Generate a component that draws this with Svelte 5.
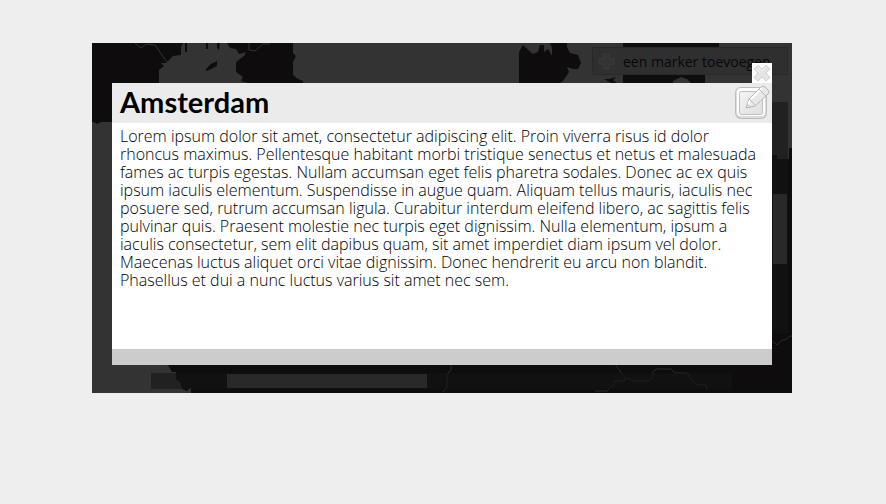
<script>
  const title = 'Amsterdam';
  const lines = [
    'Lorem ipsum dolor sit amet, consectetur adipiscing elit. Proin viverra risus id dolor',
    'rhoncus maximus. Pellentesque habitant morbi tristique senectus et netus et malesuada',
    'fames ac turpis egestas. Nullam accumsan eget felis pharetra sodales. Donec ac ex quis',
    'ipsum iaculis elementum. Suspendisse in augue quam. Aliquam tellus mauris, iaculis nec',
    'posuere sed, rutrum accumsan ligula. Curabitur interdum eleifend libero, ac sagittis felis',
    'pulvinar quis. Praesent molestie nec turpis eget dignissim. Nulla elementum, ipsum a',
    'iaculis consectetur, sem elit dapibus quam, sit amet imperdiet diam ipsum vel dolor.',
    'Maecenas luctus aliquet orci vitae dignissim. Donec hendrerit eu arcu non blandit.',
    'Phasellus et dui a nunc luctus varius sit amet nec sem.'
  ];
</script>

<main>
  <section class="map">
    <svg class="terrain" viewBox="0 0 700 350" preserveAspectRatio="xMidYMid slice" aria-hidden="true">
      <rect width="700" height="350" fill="#0e0c0d" />
      <g fill="#333">
        <path d="M67 40V27l5-4-3-3 5 0 7-7 8-1V4l2-4h2v9h2V0h19v6h2V0h9v5l2 2 1-7h7l3 5 6 1 3 5 7-2-2 4-8 6v10l7 5-2 4 7 2z" />
        <path d="M201 0v10l3 3-3 6v13l5 4 5 2v2h216V9l4-7 3 3 7 6 5-2 2-7h4v7l4-3 4 7V5l-2-5z" />
        <path d="M475 0v4l3 6 8 2 3 8-3 6h-5l-6-2 2 5-6 9-3 2h112V0z" />
        <path d="M580 0h120v105h-3v11h-12v-4h-5V40H580z" />
        <path d="M0 79h2l3 2 4-2h11v243h56l4 7h4v8l4 2 2 7 5 2 4-4v6H0z" />
      </g>
      <path fill="#0e0c0d" d="M531 0h96v4h-96zM531 32h82v8h-14l-4-4-6-2-8 4v2h-50zM512 36h5l7-2-3 3 4 3h-6zM114 26l5-5 6-3v5l-8 4-3 1z" />
      <path fill="none" stroke="#333" d="M43 0l6 5 5-4 9 1 7 10 5 7M157 0v7l6 1 8-7h7" />
      <path fill="none" stroke="#2c2c2c" d="M359 321v6l-4 4v13l-4 5M523 321l10 14v3h-11v3l-7 7h-12M533 335l5 1 4 2h15l4-4v-5l3-3h15l4 4h12l5 8 6 4h8l1 5M680 298l5 4 5-5h3l5-4h2" />
      <path fill="#151515" fill-opacity=".6" d="M680 59h16v231h-16zM59 330h581v16H59z" />
      <path fill="#292929" d="M681 151h14v70h-14zM135 331h200v14H135z" />
    </svg>

    <button class="add" type="button">
      <svg width="18" height="18" viewBox="0 0 18 18" aria-hidden="true">
        <path d="M7 2h5v5h5v5h-5v5H7v-5H2V7h5z" fill="#333" stroke="#3c3c3c" stroke-linejoin="round" />
      </svg>
      <span>een marker toevoegen</span>
    </button>

    <article class="dialog" aria-labelledby="place">
      <button class="close" type="button" aria-label="Sluiten">
        <svg width="18" height="18" viewBox="0 0 18 18" aria-hidden="true">
          <path d="M5 1.500L9 5l4-3.500L17 5l-4 4 4 4.500-4 3.500-4-4-4 4-4-3.500L5 9 1 5z" fill="#e4e4e4" stroke="#d0d0d0" stroke-linejoin="round" />
          <path d="M5 3l4 4 4-4M3 5l4 4" fill="none" stroke="#f6f6f6" />
        </svg>
      </button>
      <header>
        <h1 id="place">{title}</h1>
        <button class="edit" type="button" aria-label="Bewerken">
          <svg width="36" height="36" viewBox="0 0 36 36" aria-hidden="true">
            <defs>
              <linearGradient id="shade" x1="0" y1="0" x2="1" y2="1">
                <stop offset="0" stop-color="#f4f4f4" />
                <stop offset="1" stop-color="#dedede" />
              </linearGradient>
            </defs>
            <rect x="1" y="3" width="32" height="32" rx="6" fill="#bdbdbd" />
            <rect x="2" y="4" width="30" height="30" rx="5" fill="#dcdcdc" />
            <rect x="3" y="4" width="28" height="28" rx="4" fill="#fcfcfc" />
            <rect x="5.5" y="7.5" width="23" height="23" rx="2" fill="url(#shade)" stroke="#c0c0c0" />
            <path d="M12 24l3-9L27 3q2-2 4 0l3 3q2 2 0 4L21 22z" fill="#e8e8e8" stroke="#b6b6b6" stroke-linejoin="round" />
            <path d="M17 15L28 4M14 21l2-5" fill="none" stroke="#fff" stroke-width="2" />
            <path d="M15 15l6 6M25 5l7 7M13 20l3 3" fill="none" stroke="#bcbcbc" />
          </svg>
        </button>
      </header>
      <p>{#each lines as line}<span>{line}{' '}</span>{/each}</p>
      <footer></footer>
    </article>
  </section>
</main>

<style>
  :global(body) {
    margin: 0;
    background: #eee;
  }
  main {
    padding: 43px 94px 0 92px;
    font-family: "Open Sans", sans-serif;
    color: #000;
  }
  .map {
    position: relative;
    box-sizing: border-box;
    min-height: 350px;
    padding: 40px 20px 28px;
    overflow: hidden;
  }
  .terrain {
    position: absolute;
    inset: 0;
    width: 100%;
    height: 100%;
  }
  button {
    margin: 0;
    padding: 0;
    border: 0;
    background: none;
    font: inherit;
    cursor: pointer;
  }
  svg {
    display: block;
  }
  .add {
    position: absolute;
    top: 4px;
    right: 4px;
    display: flex;
    align-items: center;
    gap: 8px;
    box-sizing: border-box;
    width: 196px;
    height: 28px;
    padding: 0 4px;
    border: 1px solid #292929;
    background: #2f2f2f;
    color: #080808;
    font-size: 14px;
    white-space: nowrap;
  }
  .dialog {
    position: relative;
    background: #fff;
  }
  .close {
    position: absolute;
    top: -20px;
    right: 0;
    display: grid;
    place-items: center;
    width: 20px;
    height: 20px;
    background: #fff;
  }
  header {
    box-sizing: border-box;
    display: flex;
    align-items: center;
    justify-content: space-between;
    height: 40px;
    padding: 0 2px 2px 8px;
    background: #ebebeb;
  }
  h1 {
    margin: 0;
    font-family: Lato, sans-serif;
    font-size: 29px;
    line-height: 36px;
    font-weight: 700;
  }
  p {
    box-sizing: border-box;
    min-height: 226px;
    margin: 0;
    padding: 4px 8px;
    font-size: 16px;
    line-height: 18px;
    font-weight: 300;
  }
  p span {
    display: block;
    white-space: nowrap;
  }
  footer {
    height: 16px;
    background: #ccc;
  }
</style>
